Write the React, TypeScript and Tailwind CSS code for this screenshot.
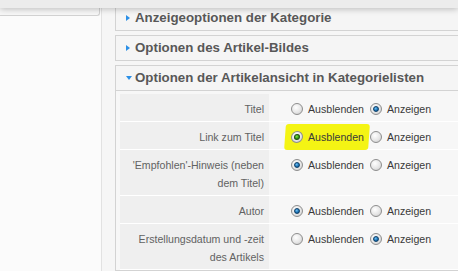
import React from "react";

type Row = {
  label: string[];
  value: "hide" | "show";
  marked?: boolean;
};

const rows: Row[] = [
  { label: ["Titel"], value: "show" },
  { label: ["Link zum Titel"], value: "hide", marked: true },
  { label: ["'Empfohlen'-Hinweis (neben", "dem Titel)"], value: "hide" },
  { label: ["Autor"], value: "hide" },
  { label: ["Erstellungsdatum und -zeit", "des Artikels"], value: "show" },
];

function Radio({ checked, green }: { checked: boolean; green?: boolean }) {
  return (
    <span className="flex h-[12px] w-[12px] shrink-0 items-center justify-center rounded-full border border-[#8e8e8e] bg-[radial-gradient(circle_at_40%_35%,#ffffff_0%,#e6e6e6_55%,#c4c4c4_100%)]">
      {checked && (
        <span
          className={
            green
              ? "h-[6px] w-[6px] rounded-full border border-[#1f4d10] bg-[radial-gradient(circle_at_40%_35%,#7fe04a_0%,#2f9a12_60%,#1c5c08_100%)]"
              : "h-[6px] w-[6px] rounded-full border border-[#0e3e66] bg-[radial-gradient(circle_at_40%_35%,#6cc0f5_0%,#1a6fb0_60%,#0c4478_100%)]"
          }
        />
      )}
    </span>
  );
}

function PanelHeader({ title, open }: { title: string; open?: boolean }) {
  return (
    <div className="flex h-[24px] items-center pl-[7px] text-[13.3px] font-bold text-[#585858]">
      <span className="flex w-[12px] justify-center">
        {open ? (
          <span className="h-0 w-0 border-x-[3px] border-t-[4px] border-x-transparent border-t-[#2b8fe6]" />
        ) : (
          <span className="ml-[-2px] h-0 w-0 border-y-[3px] border-l-[4px] border-y-transparent border-l-[#2b8fe6]" />
        )}
      </span>
      <span>{title}</span>
    </div>
  );
}

export default function App() {
  return (
    <div className="h-[271px] w-[458px] overflow-hidden bg-[#f6f6f6] font-['Liberation_Sans',Arial,sans-serif]">
      <div className="relative z-10 h-[8px] bg-[#ececec] shadow-[0_1px_6px_rgba(0,0,0,0.25)]" />
      <div className="flex">
        <div className="h-[263px] w-[102px] shrink-0 border-r border-[#e2e2e2] bg-[#fbfbfb]">
          <div className="h-[8px] w-[100px] rounded-br-[3px] border-b border-r border-[#d2d2d2] bg-[#f7f7f7]" />
        </div>
        <div className="flex min-w-0 flex-1 flex-col gap-[4px] pl-[13px]">
          <div className="-mt-[3px] w-[360px] border border-r-0 border-[#d3d3d3] bg-[#f5f5f5]">
            <PanelHeader title="Anzeigeoptionen der Kategorie" />
          </div>
          <div className="w-[360px] border border-r-0 border-[#d3d3d3] bg-[#f5f5f5]">
            <PanelHeader title="Optionen des Artikel-Bildes" />
          </div>
          <div className="w-[360px] border border-r-0 border-[#d3d3d3] bg-[#f5f5f5]">
            <PanelHeader title="Optionen der Artikelansicht in Kategorielisten" open />
            <div className="border-t border-[#d3d3d3] bg-[#f7f7f7] pl-[4px] pt-[3px]">
              {rows.map((row, i) => (
                <div key={i} className="flex border-b border-white text-[10.6px] leading-[18px]">
                  <div className="w-[149px] shrink-0 bg-[#efefef] pb-[3px] pr-[5px] pt-[6px] text-right text-[#626262]">
                    {row.label.map((l, j) => (
                      <div key={j}>{l}</div>
                    ))}
                  </div>
                  <div className="flex items-start pl-[22px] pt-[6px] text-[#3a3a3a]">
                    <span
                      className={
                        row.marked
                          ? "-my-[4px] -ml-[6px] -mr-[5px] flex h-[26px] skew-x-[-4deg] items-center gap-[5px] rounded-[3px] bg-[#f4f414] pl-[6px] pr-[5px]"
                          : "flex h-[18px] items-center gap-[5px]"
                      }
                    >
                      <Radio checked={row.value === "hide"} green={row.marked} />
                      <span className={row.marked ? "skew-x-[4deg]" : ""}>Ausblenden</span>
                    </span>
                    <span className="ml-[6px] flex h-[18px] items-center gap-[5px]">
                      <Radio checked={row.value === "show"} />
                      <span>Anzeigen</span>
                    </span>
                  </div>
                </div>
              ))}
            </div>
          </div>
        </div>
      </div>
    </div>
  );
}
